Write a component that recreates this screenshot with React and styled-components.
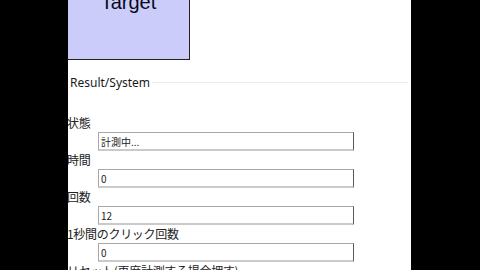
import React from 'react';
import styled, { createGlobalStyle } from 'styled-components';

const GlobalStyle = createGlobalStyle`
  html, body {
    margin: 0;
    padding: 0;
    background: #000;
  }
`;

const Page = styled.div`
  margin-left: 68px;
  width: 343px;
  height: 270px;
  overflow: hidden;
  background: #fff;
  font-family: "Noto Sans", "Noto Sans CJK JP", sans-serif;
  color: #222;
`;

const Target = styled.div`
  width: 122px;
  height: 120px;
  margin-top: -60px;
  box-sizing: border-box;
  background: #ccccfa;
  border-right: 1px solid #222;
  border-bottom: 1px solid #222;
  display: flex;
  align-items: center;
  justify-content: center;
  font-family: "Liberation Sans", Arial, sans-serif;
  font-size: 20px;
  color: #0a0a1a;
  padding-top: 6px;
`;

const Legend = styled.div`
  display: flex;
  align-items: center;
  margin: 15px 3px 0 2px;
  height: 15px;
  font-size: 12px;
  line-height: 15px;
  color: #1a1a1a;

  &::after {
    content: '';
    flex: 1;
    border-top: 1px solid #ebebeb;
    margin-left: 2px;
  }
`;

const Fields = styled.div`
  margin-top: 24px;
`;

const Label = styled.div`
  height: 18px;
  line-height: 18px;
  margin-left: -1px;
  font-family: "Noto Sans CJK JP", sans-serif;
  font-size: 12px;
  letter-spacing: -0.3px;
  color: #222;
  white-space: nowrap;
`;

const Field = styled.input`
  display: block;
  margin: 0 0 0 30px;
  width: 256px;
  height: 19px;
  box-sizing: border-box;
  padding: 0 2px;
  background: #fff;
  border-top: 1px solid #a8a8a8;
  border-left: 1px solid #a8a8a8;
  border-right: 1px solid #5a5a5a;
  border-bottom: 2px solid #cacaca;
  font-family: "Noto Sans CJK JP", sans-serif;
  font-size: 10px;
  color: #222;
  outline: none;
`;

const rows = [
  { label: '状態', value: '計測中...' },
  { label: '時間', value: '0' },
  { label: '回数', value: '12' },
  { label: '1秒間のクリック回数', value: '0' },
];

export default function App() {
  return (
    <>
      <GlobalStyle />
      <Page>
        <Target>Target</Target>
        <Legend>Result/System</Legend>
        <Fields>
          {rows.map((r) => (
            <React.Fragment key={r.label}>
              <Label>{r.label}</Label>
              <Field readOnly value={r.value} />
            </React.Fragment>
          ))}
          <Label>リセット(再度計測する場合押す)</Label>
        </Fields>
      </Page>
    </>
  );
}
